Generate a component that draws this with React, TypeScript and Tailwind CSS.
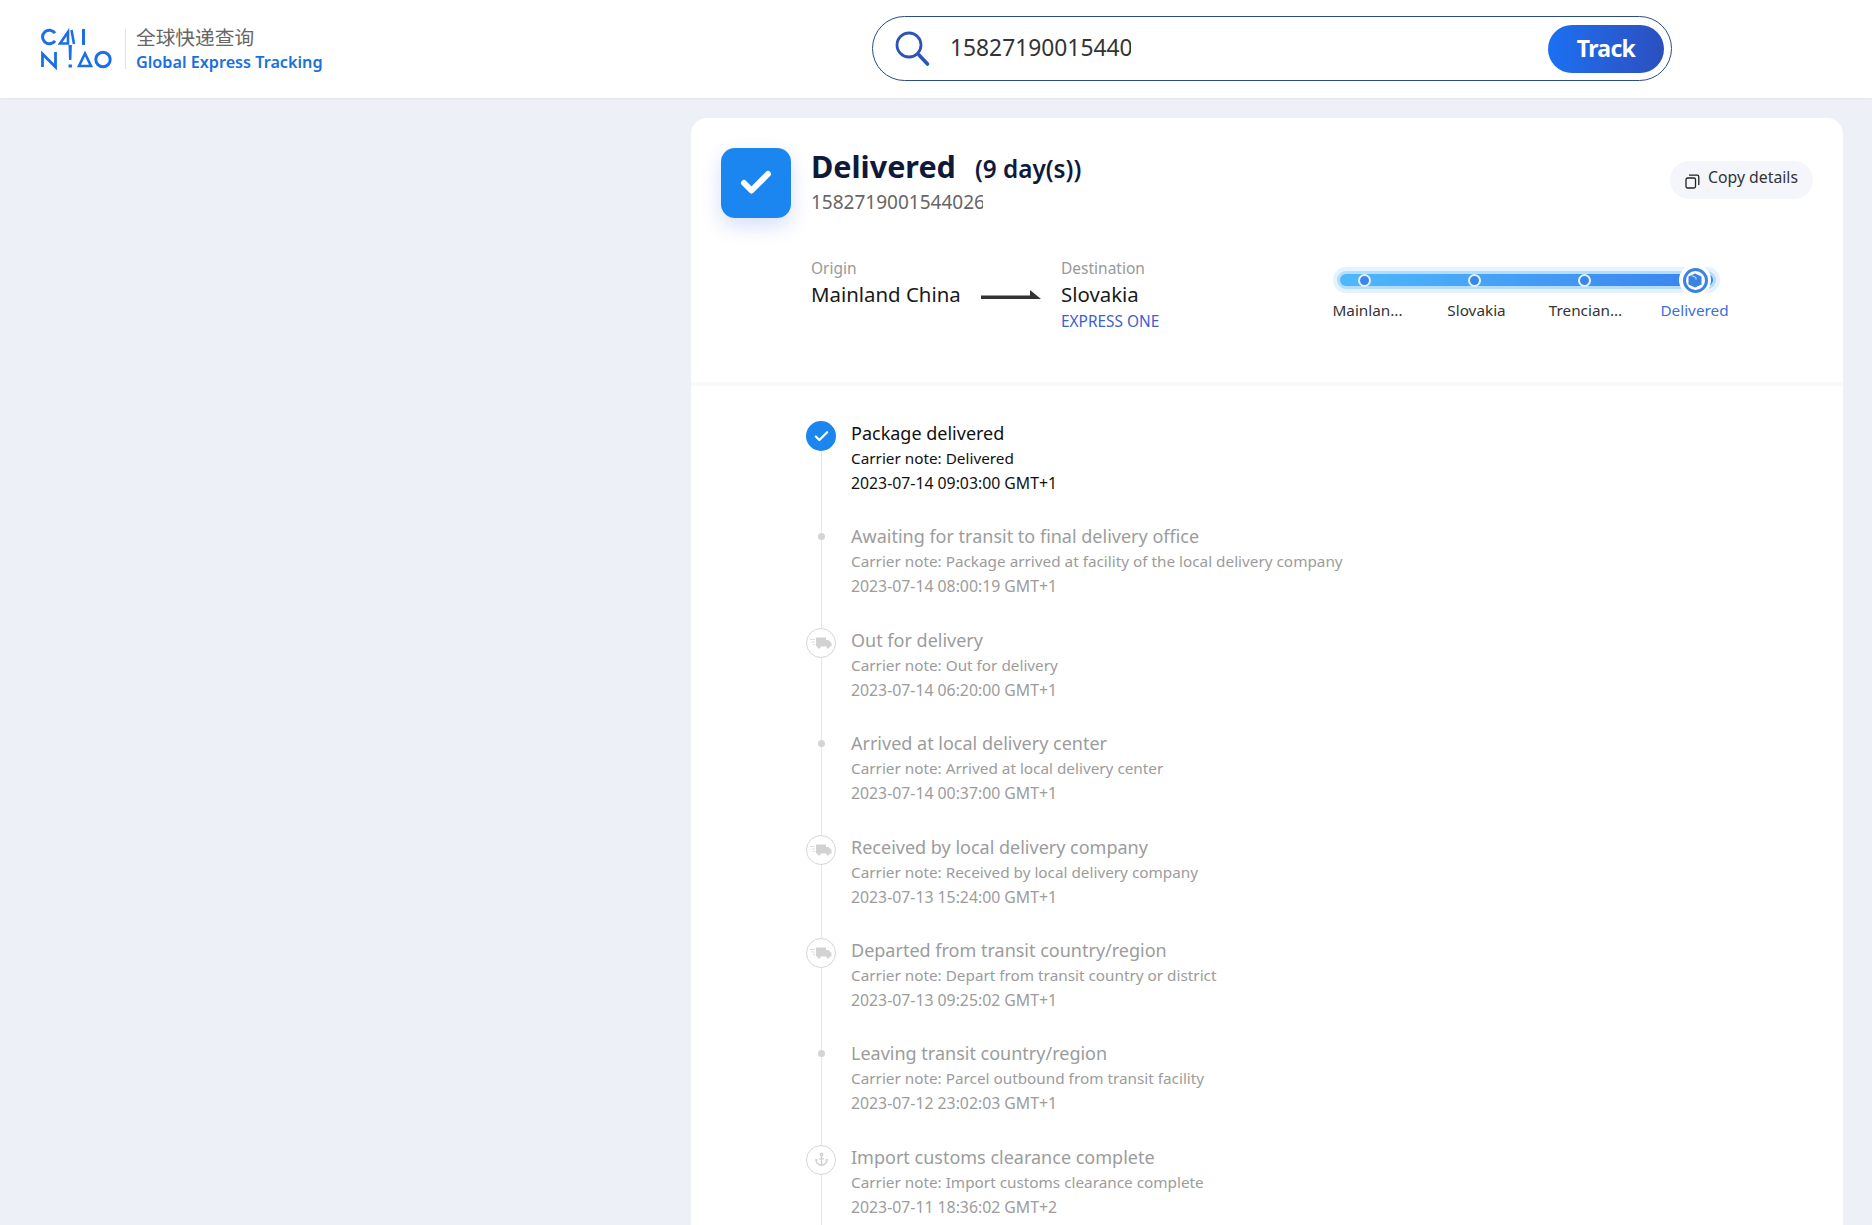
import React from "react";
import { Check, Anchor } from "lucide-react";

const FONT = "font-['Noto_Sans','Noto_Sans_CJK_SC',sans-serif]";

function Logo() {
  return (
    <svg width="74" height="42" viewBox="40 28 74 42" className="shrink-0">
      <g fill="none" stroke="#1a6fe8" strokeWidth="3">
        <path d="M55 33.2a6.8 6.8 0 1 0 0 7.6" />
        <path d="M42.5 67V54l13 13V52" strokeWidth="2.8" />
        <path d="M83.5 29v16" />
        <circle cx="103" cy="59.5" r="7.2" />
        <path d="M79 66l6-12.5 6 12.5z" strokeWidth="2.6" />
        <path d="M60 43.5l8-11.5v11.5z" strokeWidth="2.6" />
        <path d="M71.5 30l2.5 14" strokeWidth="2.6" />
      </g>
      <path d="M68.5 45h3.4l-.5 15h-2.4zM68.5 64.5h3.4v3h-3.4z" fill="#1a6fe8" />
    </svg>
  );
}

function SearchIcon() {
  return (
    <svg width="38" height="38" viewBox="0 0 38 38" fill="none" stroke="#2c54b8" strokeWidth="2.8" strokeLinecap="round" className="shrink-0">
      <circle cx="16" cy="15" r="12" />
      <path d="M26 25l8.5 9" strokeWidth="3.6" />
    </svg>
  );
}

function TruckIcon() {
  return (
    <svg width="22" height="12" viewBox="0 0 22 12" fill="#d2d2d2">
      <path d="M6 0.5h10v9H6z" />
      <path d="M16 3h2.500l3 3v3.500H16z" />
      <circle cx="9" cy="10" r="1.6" />
      <circle cx="18" cy="10" r="1.6" />
      <path d="M0 2h5v1H0zM1.5 4.500h3.500v1H1.500zM3 7h2v1H3z" fill="#dedede" />
    </svg>
  );
}

type Kind = "done" | "dot" | "truck" | "anchor";
const EVENTS: { kind: Kind; title: string; note: string; time: string }[] = [
  { kind: "done", title: "Package delivered", note: "Carrier note: Delivered", time: "2023-07-14 09:03:00 GMT+1" },
  { kind: "dot", title: "Awaiting for transit to final delivery office", note: "Carrier note: Package arrived at facility of the local delivery company", time: "2023-07-14 08:00:19 GMT+1" },
  { kind: "truck", title: "Out for delivery", note: "Carrier note: Out for delivery", time: "2023-07-14 06:20:00 GMT+1" },
  { kind: "dot", title: "Arrived at local delivery center", note: "Carrier note: Arrived at local delivery center", time: "2023-07-14 00:37:00 GMT+1" },
  { kind: "truck", title: "Received by local delivery company", note: "Carrier note: Received by local delivery company", time: "2023-07-13 15:24:00 GMT+1" },
  { kind: "truck", title: "Departed from transit country/region", note: "Carrier note: Depart from transit country or district", time: "2023-07-13 09:25:02 GMT+1" },
  { kind: "dot", title: "Leaving transit country/region", note: "Carrier note: Parcel outbound from transit facility", time: "2023-07-12 23:02:03 GMT+1" },
  { kind: "anchor", title: "Import customs clearance complete", note: "Carrier note: Import customs clearance complete", time: "2023-07-11 18:36:02 GMT+2" },
];

function EventIcon({ kind }: { kind: Kind }) {
  if (kind === "done")
    return (
      <div className="flex h-[30px] w-[30px] items-center justify-center rounded-full bg-[#1b86f0]">
        <Check size={17} color="#fff" strokeWidth={3.2} />
      </div>
    );
  if (kind === "dot")
    return (
      <div className="flex h-[24px] w-[30px] items-center justify-center">
        <div className="h-[7px] w-[7px] rounded-full bg-[#d4d4d4]" />
      </div>
    );
  return (
    <div className="flex h-[30px] w-[30px] items-center justify-center rounded-full border border-[#d6d6d6] bg-white">
      {kind === "truck" ? <TruckIcon /> : <Anchor size={15} color="#cfcfcf" strokeWidth={2.2} />}
    </div>
  );
}

function StopDot() {
  return <div className="h-[13px] w-[13px] shrink-0 rounded-full border-2 border-[#e6f3ff] bg-[#3b86ea]" />;
}

export default function App() {
  return (
    <div className={`${FONT} h-[1225px] overflow-hidden bg-[#edf0f7]`}>
      <header className="flex h-[98px] items-center bg-white shadow-[0_1px_2px_rgba(0,0,0,0.05)]">
        <div className="flex w-[872px] shrink-0 items-center pl-10">
          <Logo />
          <div className="ml-[11px] h-10 w-px bg-[#e2e2e2]" />
          <div className="ml-[10px]">
            <div className="text-[19.7px] leading-[26px] text-[#666]">全球快递查询</div>
            <div className="text-[16.2px] leading-[22px] font-semibold text-[#1a6fe0]">Global Express Tracking</div>
          </div>
        </div>
        <div className="-mt-[1px] flex h-[65px] w-[800px] items-center rounded-full border border-[#2a4a8a] pr-[7px] pl-[20px]">
          <SearchIcon />
          <div className="-mt-[1px] ml-[19px] w-[181px] overflow-hidden text-[22.8px] whitespace-nowrap text-[#333]">15827190015440269</div>
          <div className="flex-1" />
          <button className="h-12 w-[116px] rounded-full bg-gradient-to-r from-[#1a70f2] to-[#2b4fbf] text-[23px] font-bold tracking-[-0.7px] text-white">
            Track
          </button>
        </div>
      </header>

      <main className="flex pt-5">
        <div className="w-[691px] shrink-0" />
        <section className="h-[1200px] w-[1152px] rounded-t-2xl bg-white">
          <div className="h-[268px] border-b-[4px] border-[#f8f9fc] px-[30px] pt-[30px]">
            <div className="flex items-start">
              <div className="flex h-[70px] w-[70px] shrink-0 items-center justify-center rounded-[14px] bg-[#1b86f0] shadow-[0_8px_20px_rgba(60,90,220,0.2)]">
                <Check size={36} color="#fff" strokeWidth={4} />
              </div>
              <div className="ml-[20px]">
                <div className="flex h-[36px] items-baseline">
                  <span className="text-[30.5px] leading-[36px] font-bold text-[#0f1a3a]">Delivered</span>
                  <span className="ml-[19px] text-[24.3px] leading-[36px] font-semibold text-[#0f1a3a]">(9 day(s))</span>
                </div>
                <div className="mt-[6px] w-[172px] overflow-hidden text-[19px] leading-[25px] whitespace-nowrap text-[#666]">1582719001544026908</div>
              </div>
              <div className="flex-1" />
              <div className="mt-[13px] flex h-[38px] w-[143px] items-center justify-center gap-[8px] rounded-full bg-[#f5f6fb] text-[15.8px] text-[#333]">
                <svg width="15" height="15" viewBox="0 0 15 15" fill="none" stroke="#222" strokeWidth="1.3" className="mt-[2px]">
                  <rect x="1" y="4" width="9.5" height="10" rx="1.5" />
                  <path d="M4 1.2h8a1.8 1.8 0 0 1 1.8 1.8v8" />
                </svg>
                <span className="-mt-[4px]">Copy details</span>
              </div>
            </div>
            <div className="mt-[38px] flex items-start">
              <div className="ml-[90px] w-[170px]">
                <div className="text-[15.5px] leading-[24px] text-[#999]">Origin</div>
                <div className="text-[20.4px] leading-[28px] text-[#1a1a1a]">Mainland China</div>
              </div>
              <svg width="60" height="10" viewBox="0 0 60 10" className="mt-[34px] shrink-0">
                <path d="M0 5.5h50v3.500H0z" fill="#333" />
                <path d="M49 0l11 9H49z" fill="#333" />
              </svg>
              <div className="ml-[20px] w-[272px]">
                <div className="text-[15.5px] leading-[24px] text-[#999]">Destination</div>
                <div className="text-[20.4px] leading-[28px] text-[#1a1a1a]">Slovakia</div>
                <div className="mt-[2px] text-[15.4px] leading-[24px] text-[#3b5fd0]">EXPRESS ONE</div>
              </div>
              <div className="mt-[11px] w-[387px]">
                <div className="rounded-full bg-[#4da9f8]/15 p-[4px]">
                  <div className="rounded-full bg-[#4da9f8]/30 px-[3px] py-[3px]">
                    <div className="flex h-[12px] items-center gap-[97px] rounded-full bg-gradient-to-r from-[#4fb8fb] to-[#3b82ee] pl-[18px]">
                      <StopDot />
                      <StopDot />
                      <StopDot />
                      <div className="-ml-[9px] flex h-[32px] w-[32px] shrink-0 items-center justify-center rounded-full bg-white">
                        <div className="flex h-[25px] w-[25px] items-center justify-center rounded-full border-[3px] border-[#3b82e6] bg-white">
                          <svg width="14" height="15" viewBox="0 0 14 15">
                            <path d="M7 0.5l6.500 3v8L7 14.500.5 11.500v-8z" fill="#3b82e6" />
                            <path d="M3.500 2.500L8 4.500v2" stroke="#cfe2fb" strokeWidth="1" fill="none" />
                          </svg>
                        </div>
                      </div>
                    </div>
                  </div>
                </div>
                <div className="mt-[5px] -ml-[20px] flex text-center text-[15.3px] leading-[24px] text-[#333]">
                  <div className="w-[109px] shrink-0">Mainlan...</div>
                  <div className="w-[109px] shrink-0">Slovakia</div>
                  <div className="w-[109px] shrink-0">Trencian...</div>
                  <div className="w-[109px] shrink-0 text-[#3b6fd8]">Delivered</div>
                </div>
              </div>
            </div>
          </div>

          <div className="relative mt-[34px] pl-[115px]">
            <div className="absolute top-0 bottom-0 left-[129.5px] w-px bg-[#e6e6e6]" />
            {EVENTS.map((e, i) => (
              <div key={i} className="relative flex h-[103.4px] items-start">
                <div className="w-[30px] shrink-0 pt-[1px]">
                  <EventIcon kind={e.kind} />
                </div>
                <div className={`ml-[15px] ${i === 0 ? "text-[#111]" : "text-[#9c9c9c]"}`}>
                  <div className="text-[18px] leading-[26px]">{e.title}</div>
                  <div className="text-[15.3px] leading-[25px]">{e.note}</div>
                  <div className="text-[15.8px] leading-[24px]">{e.time}</div>
                </div>
              </div>
            ))}
          </div>
        </section>
      </main>
    </div>
  );
}
